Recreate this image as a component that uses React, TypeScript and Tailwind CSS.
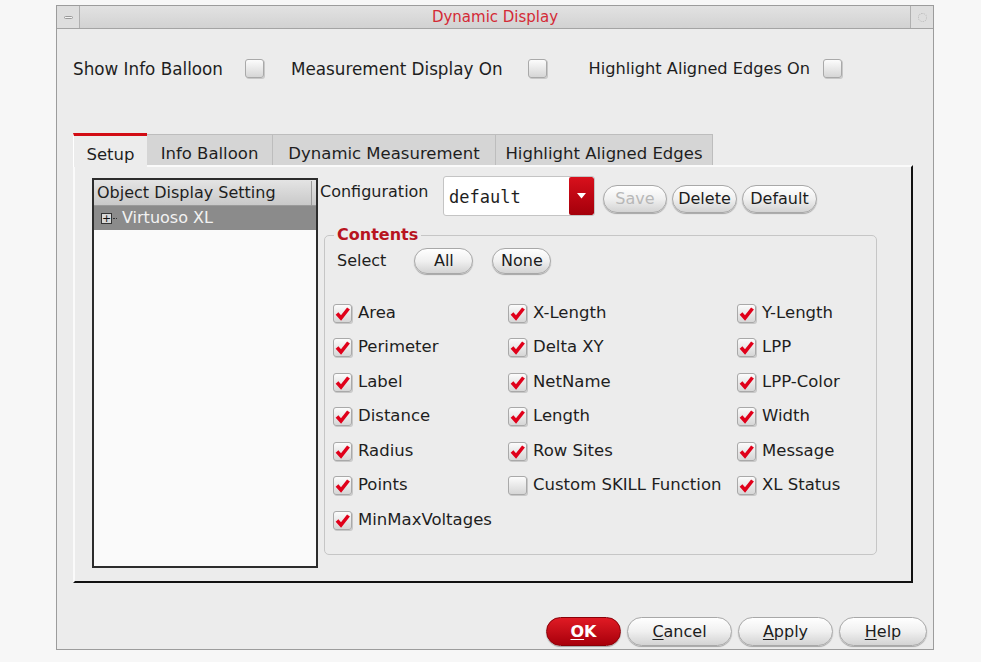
import React from 'react';
import clsx from 'clsx';

function Box({ on }: { on?: boolean }) {
  return (
    <span className="inline-flex h-[19px] w-[19px] shrink-0 items-center justify-center rounded-[3px] border border-[#a9a9a9] bg-linear-to-b from-[#fcfcfc] to-[#d6d6d6] shadow-[1px_1px_0_#c8c8c8]">
      {on && (
        <svg width="15" height="15" viewBox="0 0 15 15">
          <path d="M2 7.5 L6 12 L13.5 2.5" stroke="#e0001a" strokeWidth="3.6" fill="none" />
        </svg>
      )}
    </span>
  );
}

function Pill({ children, className, dim }: { children: React.ReactNode; className?: string; dim?: boolean }) {
  return (
    <button
      className={clsx(
        'flex items-center justify-center rounded-full border border-[#a8a8a8] bg-linear-to-b from-white via-[#f0f0f0] to-[#d3d3d3] shadow-[0_1px_1px_rgba(0,0,0,0.3)] text-[16px]',
        dim ? 'text-[#b8b8b8]' : 'text-[#1c1c1c]',
        className
      )}
    >
      {children}
    </button>
  );
}

const items: [string, boolean][][] = [
  [['Area', true], ['X-Length', true], ['Y-Length', true]],
  [['Perimeter', true], ['Delta XY', true], ['LPP', true]],
  [['Label', true], ['NetName', true], ['LPP-Color', true]],
  [['Distance', true], ['Length', true], ['Width', true]],
  [['Radius', true], ['Row Sites', true], ['Message', true]],
  [['Points', true], ['Custom SKILL Function', false], ['XL Status', true]],
  [['MinMaxVoltages', true]],
];

const tabs = [
  { label: 'Setup', w: 'w-[74px]', active: true },
  { label: 'Info Balloon', w: 'w-[126px]' },
  { label: 'Dynamic Measurement', w: 'w-[223px]' },
  { label: 'Highlight Aligned Edges', w: 'w-[217px]' },
];

export default function App() {
  return (
    <div className="h-[662px] w-[981px] bg-[#f7f7f7] pl-[56px] pt-[5px] font-['DejaVu_Sans',sans-serif] text-[#1e1e1e]">
      <div className="flex h-[645px] w-[878px] flex-col border border-[#9c9c9c] bg-[#ececec]">
        {/* title bar */}
        <div className="flex h-[23px] shrink-0 items-stretch border-b border-[#a4a4a4] bg-linear-to-b from-[#e2e2e2] to-[#d2d2d2]">
          <div className="flex w-[23px] items-center justify-center border-r border-[#b0b0b0] bg-[#dedede]">
            <span className="h-[3px] w-[9px] rounded-sm border border-[#9a9a9a] bg-[#f4f4f4]" />
          </div>
          <div className="flex flex-1 items-center justify-center text-[15px] text-[#d42a36]">Dynamic Display</div>
          <div className="flex w-[23px] items-center justify-center border-l border-[#b0b0b0] bg-[#dedede]">
            <span className="h-[9px] w-[9px] rounded-full border border-dotted border-[#b8b8b8]" />
          </div>
        </div>

        {/* top toggles */}
        <div className="mt-[29px] flex h-[21px] items-center pl-[16px]">
          <span className="pt-[2px] text-[16.8px]">Show Info Balloon</span>
          <span className="ml-[22px] flex"><Box /></span>
          <span className="ml-[27px] pt-[2px] text-[16.8px]">Measurement Display On</span>
          <span className="ml-[25px] flex"><Box /></span>
          <span className="ml-[42px] pt-[2px] text-[16.2px]">Highlight Aligned Edges On</span>
          <span className="ml-[13px] flex"><Box /></span>
        </div>

        {/* tabs */}
        <div className="ml-[16px] mt-[54px] flex h-[32px] items-end">
          {tabs.map((t) => (
            <div
              key={t.label}
              className={clsx(
                'flex items-center justify-center pt-[8px] text-[16.5px]',
                t.w,
                t.active
                  ? 'relative z-10 -mb-[2px] h-[34px] border-t-[3px] border-l border-[#d20c14] border-l-[#ffffff] bg-[#ececec]'
                  : 'h-[31px] border-t border-r border-[#bdbdbd] bg-[#d5d5d5]'
              )}
            >
              {t.label}
            </div>
          ))}
        </div>

        {/* panel */}
        <div className="ml-[16px] flex h-[418px] w-[840px] border-b-[2px] border-l-[2px] border-r-[2px] border-t-[2px] border-b-[#111] border-l-[#fafafa] border-r-[#111] border-t-[#fafafa] pl-[17px] pt-[11px]">
          {/* tree */}
          <div className="flex h-[390px] w-[226px] shrink-0 flex-col border-2 border-[#2c2c2c] bg-[#fafafa]">
            <div className="flex h-[26px] items-center border-b border-[#9a9a9a] bg-linear-to-b from-[#e4e4e4] to-[#c9c9c9] pl-[3px] text-[16px]">
              <span className="flex-1">Object Display Setting</span>
              <span className="mr-[4px] h-[24px] w-px bg-[#9a9a9a]" />
            </div>
            <div className="flex h-[24px] items-center bg-[#8b8b8b] pl-[7px] text-[16px] text-[#f2f2f2]">
              <span className="flex h-[11px] w-[11px] items-center justify-center border border-[#333] bg-[#d8d8d8] text-[11px] leading-none text-[#111]">+</span>
              <span className="ml-[1px] mr-[5px] w-[4px] border-t border-dotted border-[#333]" />
              <span>Virtuoso XL</span>
            </div>
          </div>

          {/* right side */}
          <div className="ml-[2px] flex flex-col">
            <div className="flex items-start">
              <span className="mt-[4px] w-[123px] text-[16px] leading-[20px]">Configuration</span>
              <div className="-mt-[2px] flex h-[40px] w-[152px] overflow-hidden rounded-[3px] border border-[#c4c4c4] bg-white">
                <span className="flex flex-1 items-center pl-[5px] pt-[3px] font-['DejaVu_Sans_Mono',monospace] text-[17px]">default</span>
                <span className="flex w-[25px] items-center justify-center rounded-[2px] bg-linear-to-b from-[#d8101c] to-[#a4000a]">
                  <svg width="9" height="6" viewBox="0 0 9 6">
                    <path d="M0 0 H9 L4.5 5.5 Z" fill="#fff" />
                  </svg>
                </span>
              </div>
              <Pill dim className="ml-[8px] mt-[7px] h-[28px] w-[64px]">Save</Pill>
              <Pill className="ml-[5px] mt-[7px] h-[28px] w-[65px]">Delete</Pill>
              <Pill className="ml-[5px] mt-[7px] h-[28px] w-[75px]">Default</Pill>
            </div>

            <fieldset className="ml-[4px] mt-[9px] h-[330px] w-[553px] rounded-[5px] border border-[#c6c6c6]">
              <legend className="ml-[9px] px-[3px] text-[16px] font-bold leading-[20px] text-[#b8141f]">Contents</legend>
              <div className="mt-[3px] flex h-[26px] items-center pl-[12px] text-[16px]">
                <span>Select</span>
                <Pill className="ml-[28px] h-[26px] w-[59px]">All</Pill>
                <Pill className="ml-[19px] h-[26px] w-[59px]">None</Pill>
              </div>
              <div className="mt-[22px] flex flex-col pl-[8px] text-[16.5px]">
                {items.map((row, i) => (
                  <div key={i} className="grid h-[34.5px] grid-cols-[175px_229px_1fr] items-center">
                    {row.map(([label, on]) => (
                      <div key={label} className="flex items-center gap-[6px]">
                        <Box on={on} />
                        <span>{label}</span>
                      </div>
                    ))}
                  </div>
                ))}
              </div>
            </fieldset>
          </div>
        </div>

        {/* buttons */}
        <div className="mt-[34px] flex justify-end gap-[6px] pr-[6px]">
          <button className="flex h-[29px] w-[75px] items-center justify-center rounded-full border border-[#8a0008] bg-linear-to-b from-[#e01a24] to-[#a8000a] text-[16px] font-bold text-white shadow-[0_1px_1px_rgba(0,0,0,0.3)]">
            <span className="underline underline-offset-2 decoration-1">O</span>K
          </button>
          <Pill className="h-[29px] w-[105px]">
            <span className="underline underline-offset-2">C</span>ancel
          </Pill>
          <Pill className="h-[29px] w-[95px]">
            <span className="underline underline-offset-2">A</span>pply
          </Pill>
          <Pill className="h-[29px] w-[88px]">
            <span className="underline underline-offset-2">H</span>elp
          </Pill>
        </div>
      </div>
    </div>
  );
}
